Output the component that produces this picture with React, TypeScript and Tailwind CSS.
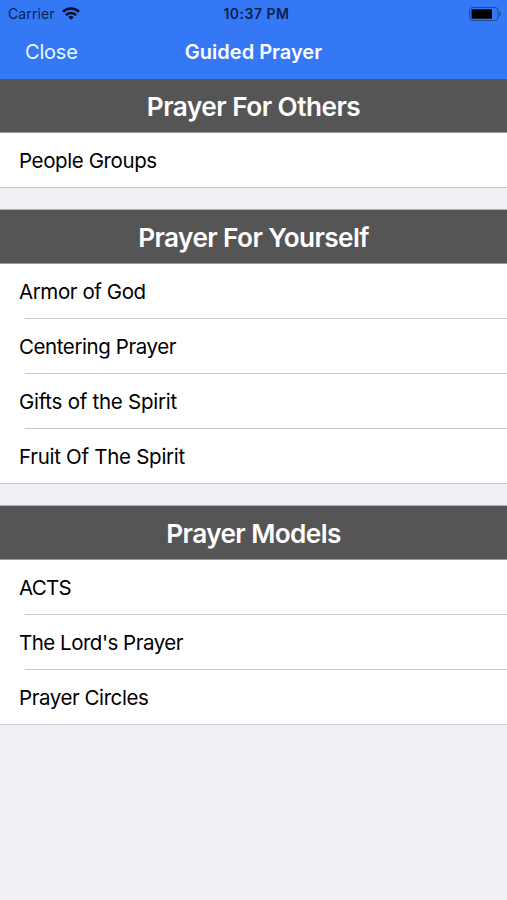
import React from 'react';

const sections = [
  {
    title: 'Prayer For Others',
    tracking: 'tracking-[-0.53px]',
    items: [{ label: 'People Groups', tracking: 'tracking-[-0.4px]' }],
  },
  {
    title: 'Prayer For Yourself',
    tracking: 'tracking-[-0.6px]',
    items: [
      { label: 'Armor of God', tracking: 'tracking-[-0.42px]' },
      { label: 'Centering Prayer', tracking: 'tracking-[-0.42px]' },
      { label: 'Gifts of the Spirit', tracking: 'tracking-[-0.26px]' },
      { label: 'Fruit Of The Spirit', tracking: 'tracking-[-0.28px]' },
    ],
  },
  {
    title: 'Prayer Models',
    tracking: 'tracking-[-0.6px]',
    items: [
      { label: 'ACTS', tracking: 'tracking-[-0.75px]' },
      { label: "The Lord's Prayer", tracking: 'tracking-[-0.5px]' },
      { label: 'Prayer Circles', tracking: 'tracking-[-0.43px]' },
    ],
  },
];

function StatusBar() {
  return (
    <div className="grid h-[27px] grid-cols-3 items-center pl-2 pr-[5px] text-[#08204f]">
      <div className="flex items-center gap-[7px]">
        <span className="text-[14px] tracking-[0.1px]">Carrier</span>
        <svg width="18" height="13" viewBox="0 0 18 13" fill="none" stroke="#03122f" strokeWidth="2.6">
          <path d="M1 4.9a11.2 11.2 0 0 1 16 0" />
          <path d="M3.9 8.2a7 7 0 0 1 10.2 0" />
          <path d="M9 12.8 6.3 10.2a3.8 3.8 0 0 1 5.4 0z" fill="#03122f" stroke="none" />
        </svg>
      </div>
      <span className="pl-[3px] text-center text-[14px] font-semibold tracking-[0.5px]">10:37 PM</span>
      <div className="flex justify-end">
        <svg width="33" height="14" viewBox="0 0 33 14">
          <rect x="0.5" y="0.5" width="28.5" height="13" rx="3" fill="none" stroke="#08204f" strokeOpacity="0.55" />
          <rect x="2.5" y="2.2" width="20.5" height="9.6" rx="1" fill="#000000" />
          <path d="M30.5 4.7a2.5 2.5 0 0 1 0 4.6z" fill="#08204f" fillOpacity="0.6" />
        </svg>
      </div>
    </div>
  );
}

export default function App() {
  return (
    <div className="h-[900px] w-[507px] overflow-hidden bg-[#efeff4] font-['Inter','Liberation_Sans',sans-serif]">
      <header className="h-[79px] bg-[#3478f6]">
        <StatusBar />
        <div className="grid h-[50px] grid-cols-3 items-center px-[25px] text-white">
          <span className="text-[20px] tracking-[-0.2px] text-[#e4fbff]">Close</span>
          <h1 className="whitespace-nowrap text-center text-[20px] font-semibold">Guided Prayer</h1>
        </div>
      </header>
      <main className="flex flex-col gap-[21px]">
        {sections.map((section) => (
          <section key={section.title} className="border-t border-[#b4b4b6] first:border-t-0">
            <h2
              className={`flex h-[54px] items-center justify-center border-b border-[#9a9a9a] bg-[#555555] pt-[2px] text-[26.2px] font-[560] text-white ${section.tracking}`}
            >
              {section.title}
            </h2>
            <ul className="border-b border-[#c8c7cc] bg-white">
              {section.items.map((item, index) => (
                <li key={item.label}>
                  {index > 0 && <div className="ml-[25px] h-px bg-[#c8c7cc]" />}
                  <div className={`flex h-[54px] items-center pl-[19px] pt-[2px] text-[20.5px] text-black ${item.tracking}`}>
                    {item.label}
                  </div>
                </li>
              ))}
            </ul>
          </section>
        ))}
      </main>
    </div>
  );
}
